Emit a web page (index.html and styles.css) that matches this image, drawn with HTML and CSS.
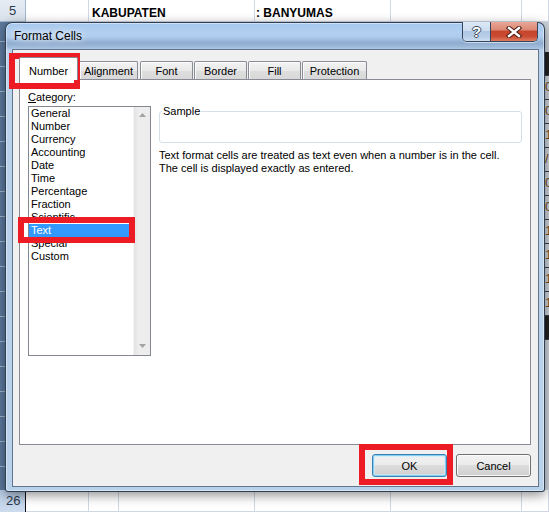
FILE: index.html
```html
<!DOCTYPE html>
<html>
<head>
<meta charset="utf-8">
<title>Format Cells</title>
<link rel="stylesheet" href="styles.css">
</head>
<body>
<div class="sheet">
  <div class="srow top">
    <div class="rh">5</div>
    <div class="sc w63"></div>
    <div class="sc w166 bold">KABUPATEN</div>
    <div class="sc w136 bold colon">: BANYUMAS</div>
    <div class="sc w131"></div>
    <div class="sc last"></div>
  </div>
  <div class="srow mid">
    <div class="rh dark"></div>
    <div class="mid-body"></div>
    <div class="edge">
      <span class="er blk"></span>
      <span class="er">0</span>
      <span class="er">0</span>
      <span class="er">1</span>
      <span class="er">/</span>
      <span class="er">0</span>
      <span class="er">0</span>
      <span class="er">1</span>
      <span class="er">1</span>
      <span class="er">1</span>
      <span class="er">1</span>
      <span class="er blk"></span>
    </div>
  </div>
  <div class="srow bottom">
    <div class="rh sel">26</div>
    <div class="sc w63"></div>
    <div class="sc w30"></div>
    <div class="sc w136"></div>
    <div class="sc w136"></div>
    <div class="sc w131"></div>
    <div class="sc last"></div>
  </div>
</div>

<div class="dialog">
  <div class="titlebar">
    <span class="title">Format Cells</span>
    <div class="caption">
      <span class="cbtn help">?</span>
      <span class="cbtn close">
        <svg width="16" height="12" viewBox="0 0 16 12">
          <path d="M3 2 L13 10 M13 2 L3 10" stroke="#4b1d12" stroke-width="4.4" stroke-linecap="square" fill="none"/>
          <path d="M3 2 L13 10 M13 2 L3 10" stroke="#ffffff" stroke-width="2.4" stroke-linecap="square" fill="none"/>
        </svg>
      </span>
    </div>
  </div>
  <div class="client">
    <div class="tabs">
      <span class="tab active">Number</span>
      <span class="tab t59">Alignment</span>
      <span class="tab t53 gap2">Font</span>
      <span class="tab t53">Border</span>
      <span class="tab t53">Fill</span>
      <span class="tab t65">Protection</span>
    </div>
    <div class="panel">
      <div class="left">
        <div class="lbl"><u>C</u>ategory:</div>
        <div class="listbox">
          <ul class="items">
            <li>General</li>
            <li>Number</li>
            <li>Currency</li>
            <li>Accounting</li>
            <li>Date</li>
            <li>Time</li>
            <li>Percentage</li>
            <li>Fraction</li>
            <li>Scientific</li>
            <li class="sel">Text</li>
            <li>Special</li>
            <li>Custom</li>
          </ul>
          <div class="vscroll">
            <svg width="7" height="4" viewBox="0 0 7 4"><path d="M0 4 L3.5 0 L7 4 Z" fill="#a3a3a3"/></svg>
            <svg width="7" height="4" viewBox="0 0 7 4"><path d="M0 0 L7 0 L3.5 4 Z" fill="#a3a3a3"/></svg>
          </div>
        </div>
      </div>
      <div class="right">
        <div class="sample"><span class="sample-lbl">Sample</span></div>
        <p class="desc">Text format cells are treated as text even when a number is in the cell.<br>The cell is displayed exactly as entered.</p>
      </div>
    </div>
    <div class="actions">
      <button class="btn default">OK</button>
      <button class="btn">Cancel</button>
    </div>
  </div>
</div>

<div class="mark mark-tab"></div>
<div class="mark mark-item"></div>
<div class="mark mark-ok"></div>
</body>
</html>
```

FILE: styles.css
```css
* { box-sizing: border-box; }
html, body { margin: 0; padding: 0; }
body {
  width: 549px;
  height: 512px;
  overflow: hidden;
  position: relative;
  background: #ffffff;
  font-family: "Liberation Sans", Arial, sans-serif;
}

/* ---------- spreadsheet behind the dialog ---------- */
.sheet {
  display: grid;
  grid-template-rows: 22px 468px 22px;
  height: 512px;
}
.srow { display: flex; }
.rh {
  width: 26px;
  flex: none;
  font-size: 13px;
  color: #2b3a4d;
  border-right: 1px solid #9eb6ce;
}
.top .rh {
  background: linear-gradient(#e6ecf4, #d9e1eb);
  padding: 3px 0 0 9px;
  line-height: 16px;
  border-bottom: 1px solid #9eb6ce;
}
.rh.dark {
  background: repeating-linear-gradient(180deg, #5d7a9e 0 24px, #a3b6cd 24px 25px);
  background-position: 0 -5px;
}
.rh.sel {
  background: linear-gradient(#b9cde6, #cddbed);
  padding-left: 6px;
  line-height: 22px;
  border-right: 1px solid #111;
}
.sc {
  flex: none;
  border-right: 1px solid #d0d7e5;
  border-bottom: 1px solid #d0d7e5;
}
.w30 { width: 30px; }
.w63 { width: 63px; }
.w131 { width: 131px; }
.w136 { width: 136px; }
.w166 { width: 166px; }
.last { flex: 1; }
.bold {
  font-weight: bold;
  font-size: 12px;
  line-height: 16px;
  padding: 5px 0 0 3px;
  color: #000;
}
.colon { padding-left: 1px; }
.mid-body { flex: 1; background: #fff; }
.edge {
  width: 27px;
  flex: none;
  background: #cfd5dc;
  display: flex;
  flex-direction: column;
  padding-top: 30px;
}
.er {
  height: 24px;
  border-bottom: 1px solid #3d4148;
  padding-left: 23px;
  font-size: 13px;
  line-height: 22px;
  color: #7b4b12;
}
.er.blk { background: linear-gradient(90deg, transparent 22px, #222 22px); }

/* ---------- dialog window ---------- */
.dialog {
  position: absolute;
  left: 5px;
  top: 22px;
  width: 540px;
  height: 470px;
  border: 1px solid rgba(25, 38, 55, 0.85);
  border-radius: 7px 7px 3px 3px;
  background:
    linear-gradient(180deg, rgba(255,255,255,0) 14px, rgba(50,80,120,0.22) 20px, rgba(50,80,120,0.12) 25px, rgba(255,255,255,0) 27px),
    linear-gradient(180deg, #a7c8ee 0px, #b2cff0 10px, #a9c6e8 20px, #bad2ec 27px, #b9d2ec 100%);
  box-shadow: 0 3px 12px rgba(0, 0, 0, 0.45), inset 0 0 0 1px rgba(255, 255, 255, 0.45);
  display: flex;
  flex-direction: column;
}
.titlebar {
  height: 26px;
  flex: none;
  display: flex;
  justify-content: space-between;
  align-items: flex-start;
}
.title {
  font-size: 12px;
  line-height: 14px;
  padding: 6px 0 0 8px;
  color: #000;
  text-shadow: 0 0 6px #fff, 0 0 10px rgba(255, 255, 255, 0.8);
}
.caption {
  display: flex;
  height: 20px;
  margin: -1px 6px 0 0;
  border: 1px solid #34465b;
  border-top: 0;
  border-radius: 0 0 5px 5px;
  overflow: hidden;
  box-shadow: 0 1px 0 rgba(255, 255, 255, 0.55);
}
.cbtn {
  display: flex;
  align-items: center;
  justify-content: center;
}
.help {
  width: 28px;
  border-right: 1px solid #34465b;
  background: linear-gradient(#dde8f5 0%, #ccdcef 45%, #afc7e3 50%, #b9cfe8 80%, #d0e0f2 100%);
  font-size: 15px;
  font-weight: bold;
  color: #fff;
  line-height: 18px;
  text-shadow: 1px 0 #3a4a5c, -1px 0 #3a4a5c, 0 1px #3a4a5c, 0 -1px #3a4a5c;
}
.close {
  width: 46px;
  background: linear-gradient(#eaa697 0%, #dc8a76 40%, #c8452d 50%, #c94a31 75%, #e07a5e 100%);
}

.client {
  flex: 1;
  margin: 0 5px 4px 6px;
  border: 1px solid #61758e;
  background: #f0f0f0;
  display: flex;
  flex-direction: column;
  padding-top: 7px;
}

/* tabs */
.tabs {
  height: 22px;
  flex: none;
  display: flex;
  align-items: flex-end;
  padding-left: 6px;
}
.tab {
  height: 18px;
  margin-left: 1px;
  border: 1px solid #898c95;
  border-bottom: 0;
  border-radius: 2px 2px 0 0;
  background: linear-gradient(#f3f3f3, #e9e9e9 50%, #dedede 51%, #d8d8d8);
  box-shadow: inset 1px 1px 0 rgba(255, 255, 255, 0.8);
  font-size: 11px;
  line-height: 13px;
  padding-top: 3px;
  text-align: center;
  color: #000;
}
.tab.active {
  width: 59px;
  height: 23px;
  margin-left: 0;
  margin-bottom: -1px;
  padding-top: 7px;
  background: #fff;
  box-shadow: none;
  position: relative;
  z-index: 1;
}
.t53 { width: 53px; }
.t59 { width: 59px; }
.t65 { width: 65px; }
.gap2 { margin-left: 2px; }

/* tab page */
.panel {
  height: 366px;
  flex: none;
  margin: 0 7px 0 6px;
  border: 1px solid #898c95;
  background: #fff;
  display: flex;
  gap: 8px;
  padding: 10px 8px 0 8px;
  font-size: 11px;
  color: #000;
}
.left { width: 123px; flex: none; }
.lbl { line-height: 14px; height: 16px; }
.listbox {
  height: 250px;
  border: 1px solid #828790;
  background: #fff;
  display: flex;
}
.items {
  flex: 1;
  margin: 0;
  padding: 0;
  list-style: none;
  line-height: 13px;
}
.items li { height: 13px; padding-left: 2px; }
.items li.sel { background: #3399ff; color: #fff; }
.vscroll {
  width: 17px;
  flex: none;
  background: linear-gradient(90deg, #e3e3e3, #eeeeee 30%, #ececec);
  border-left: 1px solid #f4f4f4;
  display: flex;
  flex-direction: column;
  justify-content: space-between;
  align-items: center;
  padding: 6px 0 7px;
}

.right { flex: 1; padding-top: 21px; }
.sample {
  position: relative;
  height: 32px;
  border: 1px solid #d5dfe5;
  border-radius: 3px;
}
.sample-lbl {
  position: absolute;
  left: 2px;
  top: -7px;
  padding: 0 1px;
  background: #fff;
  line-height: 13px;
}
.desc { margin: 6px 0 0; line-height: 13px; }

/* buttons */
.actions {
  flex: 1;
  display: flex;
  justify-content: flex-end;
  align-items: flex-start;
  gap: 9px;
  padding: 9px 7px 0 0;
}
.btn {
  width: 75px;
  height: 23px;
  padding: 0;
  border: 1px solid #707070;
  border-radius: 3px;
  background: linear-gradient(#f2f2f2 0%, #ebebeb 49%, #dddddd 50%, #cfcfcf 100%);
  box-shadow: inset 0 0 0 1px rgba(255, 255, 255, 0.8);
  font-family: "Liberation Sans", Arial, sans-serif;
  font-size: 11px;
  color: #000;
}
.btn.default {
  border-color: #3c7fb1;
  box-shadow: inset 0 0 0 1px #7fd0f3, inset 0 0 0 2px rgba(200, 238, 252, 0.6);
}

/* red annotation boxes */
.mark {
  position: absolute;
  border: 6px solid #ed1c24;
}
.mark-tab { left: 9px; top: 53px; width: 71px; height: 36px; }
.mark-item { left: 18px; top: 217px; width: 117px; height: 26px; }
.mark-ok { left: 359px; top: 444px; width: 94px; height: 41px; }
```
